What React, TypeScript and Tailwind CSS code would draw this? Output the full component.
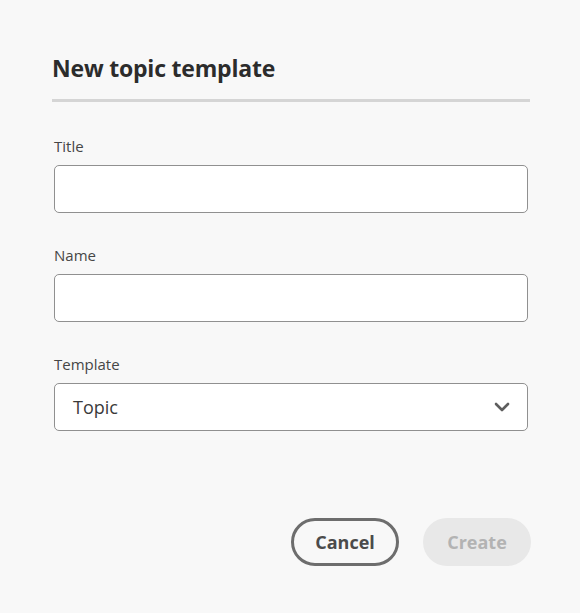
import React from "react";

export default function App() {
  const font = { fontFamily: '"Open Sans", "Noto Sans", sans-serif' };
  return (
    <div className="w-[580px] h-[613px] bg-[#f8f8f8] text-[#222222]" style={font}>
      <div className="pl-[52px] pr-[50px] pt-[51px]">
        <h1 className="text-[23px] leading-[34px] font-bold text-[#2c2c2c] tracking-[-0.2px]">New topic template</h1>
        <div className="mt-[14px] h-[3px] bg-[#d5d5d5]" />
        <div className="pl-[2px] pr-[2px] mt-[33px] flex flex-col">
          <label className="text-[15px] leading-[22px] text-[#464646]">Title</label>
          <div className="mt-[8px] h-[48px] bg-white border border-[#909090] rounded-[5px]" />
          <label className="mt-[31px] text-[15px] leading-[22px] text-[#464646]">Name</label>
          <div className="mt-[8px] h-[48px] bg-white border border-[#909090] rounded-[5px]" />
          <label className="mt-[31px] text-[15px] leading-[22px] text-[#464646]">Template</label>
          <div className="mt-[8px] h-[48px] bg-white border border-[#909090] rounded-[5px] flex items-center justify-between pl-[18px] pr-[17px]">
            <span className="text-[18px] text-[#3a3a3a]">Topic</span>
            <svg width="16" height="10" viewBox="0 0 16 10">
              <path d="M2 2 L8 8 L14 2" fill="none" stroke="#5e5e5e" strokeWidth="2.6" strokeLinecap="round" strokeLinejoin="round" />
            </svg>
          </div>
        </div>
        <div className="mt-[87px] flex justify-end gap-[24px]">
          <button className="w-[108px] h-[48px] rounded-full border-[3px] border-[#6d6d6d] text-[18px] font-bold text-[#4b4b4b]">Cancel</button>
          <button className="w-[108px] h-[48px] rounded-full bg-[#e8e8e8] text-[18px] font-bold text-[#b3b3b3] mr-[-1px]">Create</button>
        </div>
      </div>
    </div>
  );
}
